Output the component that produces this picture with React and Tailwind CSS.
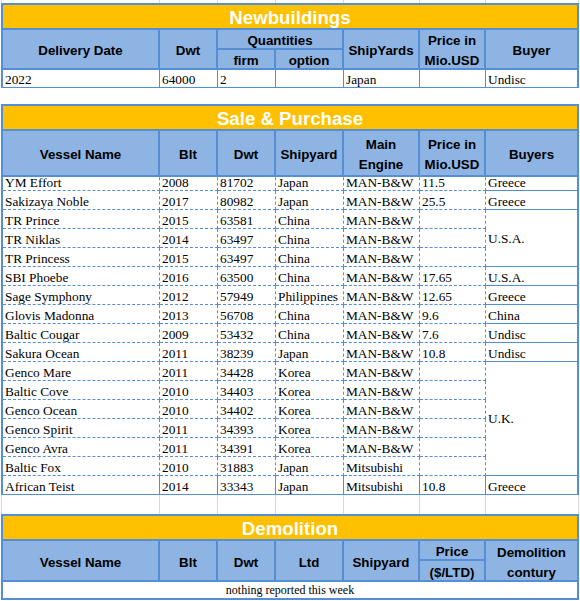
import React from 'react';

const COLS = [157, 58, 58, 68, 76, 66, 93];
const GRID = 'grid grid-cols-[157px_58px_58px_68px_76px_66px_93px]';

const sales = [
  ['YM Effort', '2008', '81702', 'Japan', 'MAN-B&W', '11.5', 'Greece'],
  ['Sakizaya Noble', '2017', '80982', 'Japan', 'MAN-B&W', '25.5', 'Greece'],
  ['TR Prince', '2015', '63581', 'China', 'MAN-B&W', '', { text: 'U.S.A.', span: 3 }],
  ['TR Niklas', '2014', '63497', 'China', 'MAN-B&W', ''],
  ['TR Princess', '2015', '63497', 'China', 'MAN-B&W', ''],
  ['SBI Phoebe', '2016', '63500', 'China', 'MAN-B&W', '17.65', 'U.S.A.'],
  ['Sage Symphony', '2012', '57949', 'Philippines', 'MAN-B&W', '12.65', 'Greece'],
  ['Glovis Madonna', '2013', '56708', 'China', 'MAN-B&W', '9.6', 'China'],
  ['Baltic Cougar', '2009', '53432', 'China', 'MAN-B&W', '7.6', 'Undisc'],
  ['Sakura Ocean', '2011', '38239', 'Japan', 'MAN-B&W', '10.8', 'Undisc'],
  ['Genco Mare', '2011', '34428', 'Korea', 'MAN-B&W', '', { text: 'U.K.', span: 6 }],
  ['Baltic Cove', '2010', '34403', 'Korea', 'MAN-B&W', ''],
  ['Genco Ocean', '2010', '34402', 'Korea', 'MAN-B&W', ''],
  ['Genco Spirit', '2011', '34393', 'Korea', 'MAN-B&W', ''],
  ['Genco Avra', '2011', '34391', 'Korea', 'MAN-B&W', ''],
  ['Baltic Fox', '2010', '31883', 'Japan', 'Mitsubishi', ''],
  ['African Teist', '2014', '33343', 'Japan', 'Mitsubishi', '10.8', 'Greece'],
];

// header cell: solid 2px right/bottom border, bold arial centered
const head =
  'flex items-center justify-center pt-[4px] text-center border-r-2 border-b-2 border-[#558ed5] bg-[#8db4e2] font-bold text-[13.33px] leading-[20px] text-black font-["Liberation_Sans",Arial,sans-serif]';

// data cell: dashed 1px right/bottom border, text sits at the bottom like excel
const cellBase =
  'flex items-end pl-[2px] border-b border-dashed border-[#558ed5] text-[13.33px] leading-[15px] whitespace-nowrap';

function Title({ children }) {
  return (
    <div className='ml-[1px] flex h-[27px] w-[578px] items-center justify-center pt-[2px] border-2 border-[#558ed5] bg-[#ffc000] text-[18.67px] font-bold leading-[22px] text-white font-["Liberation_Sans",Arial,sans-serif]'>
      {children}
    </div>
  );
}

function GridStrip({ h }) {
  return (
    <div className="ml-[1px] flex" style={{ height: h }}>
      <div className="w-[2px] border-l border-[#d9d9d9]" />
      {COLS.map((w, i) => (
        <div key={i} className="border-r border-[#d9d9d9]" style={{ width: w }} />
      ))}
    </div>
  );
}

function Cell({ col, last, className = '', children }) {
  const right = col === 6 ? ' border-r-2 border-solid' : ' border-r border-dashed';
  const bottom = last ? ' !border-solid' : '';
  return <div className={cellBase + right + bottom + ' ' + className}>{children}</div>;
}

export default function App() {
  return (
    <div className='w-[580px] bg-white font-["Liberation_Serif","Times_New_Roman",serif] text-black'>
      <GridStrip h={3} />

      {/* Newbuildings */}
      <Title>Newbuildings</Title>
      <div className={GRID + ' ml-[1px] grid-rows-[20px_20px] border-l-2 border-[#558ed5]'}>
        <div className={head + ' row-span-2'}>Delivery Date</div>
        <div className={head + ' row-span-2'}>Dwt</div>
        <div className={head + ' col-span-2'}>Quantities</div>
        <div className={head + ' row-span-2'}>ShipYards</div>
        <div className={head + ' row-span-2'}>
          Price in
          <br />
          Mio.USD
        </div>
        <div className={head + ' row-span-2'}>Buyer</div>
        <div className={head}>firm</div>
        <div className={head}>option</div>
      </div>
      <div className={GRID + ' ml-[1px] auto-rows-[18px] border-l-2 border-[#558ed5]'}>
        {['2022', '64000', '2', '', 'Japan', '', 'Undisc'].map((c, j) => (
          <Cell key={j} col={j} last>
            {c}
          </Cell>
        ))}
      </div>

      <div className="h-[16px]" />

      {/* Sale & Purchase */}
      <Title>Sale &amp; Purchase</Title>
      <div className={GRID + ' ml-[1px] h-[41px] border-l-2 border-[#558ed5]'}>
        <div className={head}>Vessel Name</div>
        <div className={head}>Blt</div>
        <div className={head}>Dwt</div>
        <div className={head}>Shipyard</div>
        <div className={head}>
          Main
          <br />
          Engine
        </div>
        <div className={head}>
          Price in
          <br />
          Mio.USD
        </div>
        <div className={head}>Buyers</div>
      </div>
      <div className={GRID + ' ml-[1px] auto-rows-[19px] border-l-2 border-[#558ed5]'}>
        {sales.map((r, i) =>
          r.map((c, j) => {
            const isLast = i === sales.length - 1;
            if (typeof c === 'object') {
              const spanCls = c.span === 3 ? 'row-span-3 !items-center' : 'row-span-6 !items-center';
              const endsLast = i + c.span === sales.length;
              return (
                <Cell key={i + '-' + j} col={j} last={endsLast} className={spanCls}>
                  {c.text}
                </Cell>
              );
            }
            return (
              <Cell key={i + '-' + j} col={j} last={isLast}>
                {c}
              </Cell>
            );
          })
        )}
      </div>

      <GridStrip h={19} />

      {/* Demolition */}
      <Title>Demolition</Title>
      <div className={GRID + ' ml-[1px] grid-rows-[20px_21px] border-l-2 border-[#558ed5]'}>
        <div className={head + ' row-span-2'}>Vessel Name</div>
        <div className={head + ' row-span-2'}>Blt</div>
        <div className={head + ' row-span-2'}>Dwt</div>
        <div className={head + ' row-span-2'}>Ltd</div>
        <div className={head + ' row-span-2'}>Shipyard</div>
        <div className={head}>Price</div>
        <div className={head + ' row-span-2'}>
          Demolition
          <br />
          contury
        </div>
        <div className={head}>($/LTD)</div>
      </div>
      <div className="ml-[1px] flex h-[18px] w-[578px] items-center justify-center border-x-2 border-b-2 border-[#558ed5] text-[12px] leading-[14px]">
        nothing reported this week
      </div>
    </div>
  );
}
